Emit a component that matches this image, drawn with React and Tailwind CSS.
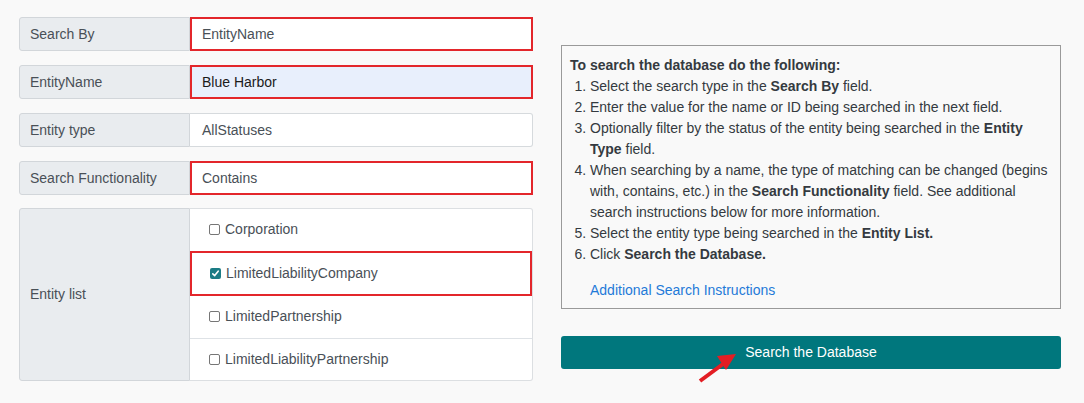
import React from 'react';

const fields = [
  { label: 'Search By', value: 'EntityName', marked: true },
  { label: 'EntityName', value: 'Blue Harbor', marked: true, filled: true },
  { label: 'Entity type', value: 'AllStatuses' },
  { label: 'Search Functionality', value: 'Contains', marked: true },
];

const entities = [
  { name: 'Corporation' },
  { name: 'LimitedLiabilityCompany', checked: true },
  { name: 'LimitedPartnership' },
  { name: 'LimitedLiabilityPartnership' },
];

const Checkbox = ({ checked }) =>
  checked ? (
    <span className="flex h-[11px] w-[11px] items-center justify-center rounded-[2px] bg-[#1b7c85]">
      <svg width="9" height="9" viewBox="0 0 9 9" fill="none">
        <path d="M1.8 4.8 L3.7 6.6 L7.2 2.2" stroke="white" strokeWidth="1.6" strokeLinecap="round" strokeLinejoin="round" />
      </svg>
    </span>
  ) : (
    <span className="h-[11px] w-[11px] rounded-[2px] border border-[#767676] bg-white" />
  );

const App = () => {
  return (
    <div
      className="relative h-[403px] w-[1084px] bg-[#f9f9f9] text-[14px] text-[#495057]"
      style={{ fontFamily: '"Liberation Sans", Arial, sans-serif' }}
    >
      <div className="flex gap-[28px] pl-[19px] pt-[17px]">
        {/* Left: form */}
        <div className="flex w-[514px] flex-col gap-[14px]">
          {fields.map((f) => (
            <div key={f.label} className="flex h-[34px]">
              <div className="flex w-[171px] items-center rounded-l-[3px] border border-[#d2d6da] bg-[#e9ecef] pl-[10px]">
                {f.label}
              </div>
              <div
                className={
                  'flex flex-1 items-center ' +
                  (f.marked
                    ? 'border-2 border-[#e3262b] pl-[10px] '
                    : 'rounded-r-[3px] border border-l-0 border-[#d6dadd] pl-[12px] ') +
                  (f.filled ? 'bg-[#e8effc] text-[#1a1a1a]' : 'bg-white')
                }
              >
                {f.value}
              </div>
            </div>
          ))}

          <div className="-mt-[1px] flex h-[173px]">
            <div className="flex w-[171px] items-center rounded-l-[3px] border border-[#d2d6da] bg-[#e9ecef] pl-[10px]">
              Entity list
            </div>
            <div className="flex flex-1 flex-col rounded-r-[3px] border border-l-0 border-[#dcdfe2] bg-white">
              {entities.map((e, i) => (
                <div
                  key={e.name}
                  className={
                    'flex flex-1 items-center gap-[5px] ' +
                    (e.checked
                      ? 'border-2 border-[#e3262b] pl-[18px]'
                      : i > 0 && !entities[i - 1].checked
                        ? 'border-t border-[#dee2e6] pl-[19px]'
                        : 'pl-[19px]')
                  }
                >
                  <Checkbox checked={e.checked} />
                  <span>{e.name}</span>
                </div>
              ))}
            </div>
          </div>
        </div>

        {/* Right: instructions and button */}
        <div className="flex w-[500px] flex-col pt-[28px]">
          <div className="h-[264px] border border-[#9a9a9a] px-[8px] pt-[9px] leading-[21px] text-[#343a40]">
            <div className="font-bold">To search the database do the following:</div>
            <ol className="ml-[20px] list-decimal">
              <li>
                Select the search type in the <b>Search By</b> field.
              </li>
              <li>Enter the value for the name or ID being searched in the next field.</li>
              <li>
                Optionally filter by the status of the entity being searched in the <b>Entity Type</b> field.
              </li>
              <li>
                When searching by a name, the type of matching can be changed (begins with, contains, etc.) in the{' '}
                <b>Search Functionality</b> field. See additional search instructions below for more information.
              </li>
              <li>
                Select the entity type being searched in the <b>Entity List.</b>
              </li>
              <li>
                Click <b>Search the Database.</b>
              </li>
            </ol>
            <div className="mt-[15px] pl-[20px]">
              <a href="#" className="text-[#1f7ad8]">
                Additional Search Instructions
              </a>
            </div>
          </div>

          <button className="mt-[27px] h-[33px] w-full rounded-[3px] bg-[#00777d] text-[14px] text-white">
            Search the Database
          </button>
        </div>
      </div>

      {/* Annotation arrow */}
      <svg className="pointer-events-none absolute left-[690px] top-[345px]" width="60" height="45" viewBox="0 0 60 45">
        <line x1="10" y1="36" x2="33" y2="19" stroke="#e31e24" strokeWidth="4" strokeLinecap="butt" />
        <polygon points="46,9 27,11 36,25" fill="#e31e24" />
      </svg>
    </div>
  );
};

export default App;
